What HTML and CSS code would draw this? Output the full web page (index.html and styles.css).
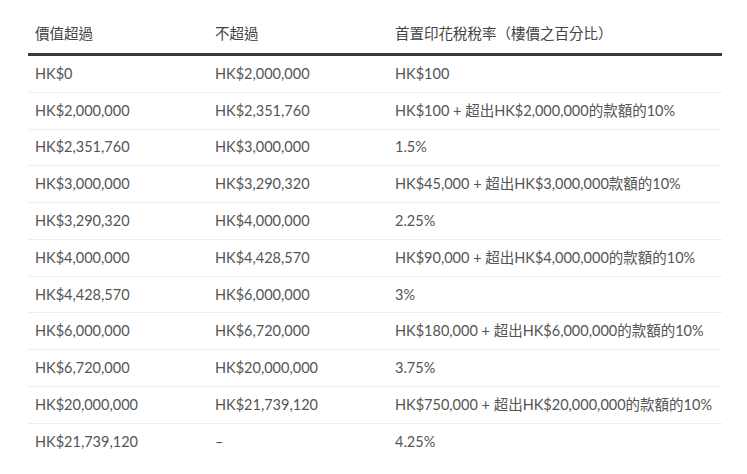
FILE: index.html
```html
<!DOCTYPE html>
<html lang="zh-Hant">
<head>
<meta charset="utf-8">
<link rel="stylesheet" href="styles.css">
</head>
<body>
<table class="rates">
  <thead>
    <tr><th>價值超過</th><th>不超過</th><th>首置印花稅稅率（樓價之百分比）</th></tr>
  </thead>
  <tbody>
    <tr><td>HK$0</td><td>HK$2,000,000</td><td>HK$100</td></tr>
    <tr><td>HK$2,000,000</td><td>HK$2,351,760</td><td>HK$100 + 超出HK$2,000,000的款額的10%</td></tr>
    <tr><td>HK$2,351,760</td><td>HK$3,000,000</td><td>1.5%</td></tr>
    <tr><td>HK$3,000,000</td><td>HK$3,290,320</td><td>HK$45,000 + 超出HK$3,000,000款額的10%</td></tr>
    <tr><td>HK$3,290,320</td><td>HK$4,000,000</td><td>2.25%</td></tr>
    <tr><td>HK$4,000,000</td><td>HK$4,428,570</td><td>HK$90,000 + 超出HK$4,000,000的款額的10%</td></tr>
    <tr><td>HK$4,428,570</td><td>HK$6,000,000</td><td>3%</td></tr>
    <tr><td>HK$6,000,000</td><td>HK$6,720,000</td><td>HK$180,000 + 超出HK$6,000,000的款額的10%</td></tr>
    <tr><td>HK$6,720,000</td><td>HK$20,000,000</td><td>3.75%</td></tr>
    <tr><td>HK$20,000,000</td><td>HK$21,739,120</td><td>HK$750,000 + 超出HK$20,000,000的款額的10%</td></tr>
    <tr><td>HK$21,739,120</td><td>–</td><td>4.25%</td></tr>
  </tbody>
</table>
</body>
</html>
```
FILE: styles.css
```css
html, body {
  margin: 0;
  padding: 0;
  background: #fff;
}
body {
  padding: 14px 25px 0 28px;
  font-family: Lato, "Noto Sans CJK TC", sans-serif;
  font-size: 14.5px;
  color: #555;
}
.rates {
  width: 694px;
  border-collapse: collapse;
  table-layout: fixed;
}
.rates th:nth-child(1), .rates td:nth-child(1) { width: 166px; }
.rates th:nth-child(2), .rates td:nth-child(2) { width: 166px; }
.rates th {
  text-align: left;
  font-weight: 400;
  color: #444;
  padding: 9.5px 7px 9.5px;
  border-bottom: 3px solid #3a3a3a;
  line-height: 20px;
}
.rates td {
  padding: 7.9px 7px 7.9px;
  line-height: 20px;
  border-bottom: 1.5px solid #eee;
  white-space: nowrap;
}
.rates tbody tr:last-child td {
  border-bottom: none;
}
```
